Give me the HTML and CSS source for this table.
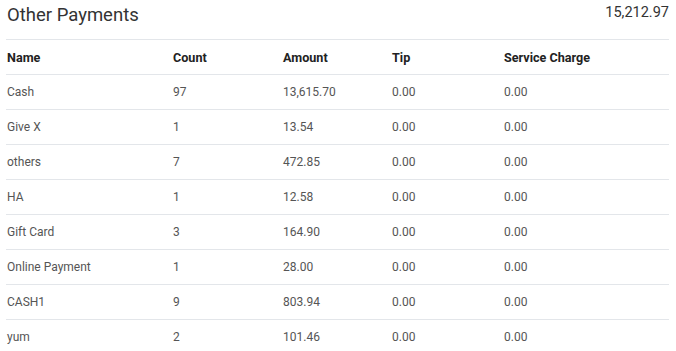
FILE: index.html
```html
<!DOCTYPE html>
<html>
<head>
<meta charset="utf-8">
<link rel="stylesheet" href="styles.css">
</head>
<body>
<div class="panel">
  <div class="head">
    <h2 class="title">Other Payments</h2>
    <span class="total">15,212.97</span>
  </div>
  <table class="grid">
    <thead>
      <tr><th class="c1">Name</th><th class="c2">Count</th><th class="c3">Amount</th><th class="c4">Tip</th><th>Service Charge</th></tr>
    </thead>
    <tbody>
      <tr><td>Cash</td><td>97</td><td>13,615.70</td><td>0.00</td><td>0.00</td></tr>
      <tr><td>Give X</td><td>1</td><td>13.54</td><td>0.00</td><td>0.00</td></tr>
      <tr><td>others</td><td>7</td><td>472.85</td><td>0.00</td><td>0.00</td></tr>
      <tr><td>HA</td><td>1</td><td>12.58</td><td>0.00</td><td>0.00</td></tr>
      <tr><td>Gift Card</td><td>3</td><td>164.90</td><td>0.00</td><td>0.00</td></tr>
      <tr><td>Online Payment</td><td>1</td><td>28.00</td><td>0.00</td><td>0.00</td></tr>
      <tr><td>CASH1</td><td>9</td><td>803.94</td><td>0.00</td><td>0.00</td></tr>
      <tr><td>yum</td><td>2</td><td>101.46</td><td>0.00</td><td>0.00</td></tr>
    </tbody>
  </table>
</div>
</body>
</html>
```
FILE: styles.css
```css
html, body { margin: 0; padding: 0; background: #fff; }
body { font-family: Roboto, "Liberation Sans", sans-serif; color: #555; }
.panel { padding: 0 7px 0 6px; }
.head { display: flex; justify-content: space-between; align-items: flex-start; height: 39px; }
.title { margin: 3px 0 0 1px; font-size: 18.5px; font-weight: 400; color: #333; line-height: 24px; }
.total { margin-top: 3px; font-size: 14.5px; color: #333; line-height: 20px; }
.grid { width: 100%; border-collapse: collapse; table-layout: fixed; font-size: 12px; }
.grid th, .grid td { text-align: left; padding: 0 0 0 1px; height: 34px; border-top: 1px solid #e3e6ea; vertical-align: middle; }
.grid th { font-weight: 700; font-size: 12.6px; color: #222; }
.grid td { color: #555; }
.c1 { width: 165px; }
.c2 { width: 109px; }
.c3 { width: 108px; }
.c4 { width: 111px; }
```
